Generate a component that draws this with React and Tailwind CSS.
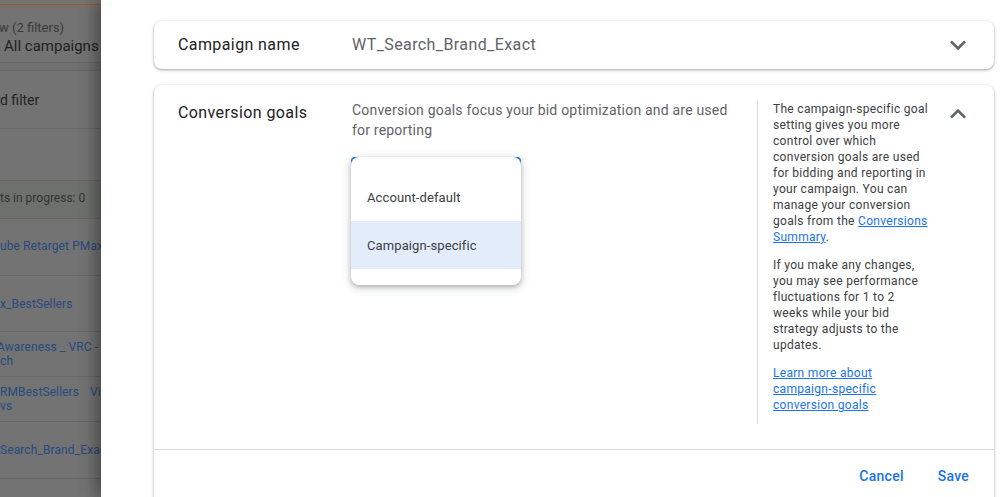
import React from 'react';

function Chevron({ up }) {
  return (
    <svg width="32" height="32" viewBox="0 0 24 24" className="shrink-0 fill-[#5f6368]">
      {up ? (
        <path d="M12 8l-6 6 1.41 1.41L12 10.83l4.59 4.58L18 14z" />
      ) : (
        <path d="M16.59 8.59L12 13.17 7.41 8.59 6 10l6 6 6-6z" />
      )}
    </svg>
  );
}

// the campaigns table behind the scrim, already dimmed
function Backdrop() {
  return (
    <div className="w-[101px] shrink-0 overflow-hidden whitespace-nowrap bg-[#737373] text-[#2a2a2a]">
      <div className="h-[4px]" />
      <div className="h-px bg-[#a6581e]" />
      <div className="h-[57px] pt-[15px]">
        <div className="-ml-[1px] text-[13px] leading-[16px] text-[#3a3a3a]">w (2 filters)</div>
        <div className="mt-[1px] pl-[4px] text-[15px] leading-[18px] text-[#222]">All campaigns</div>
      </div>
      <div className="h-[9px] border-y border-[#666] bg-[#6f6f6f]" />
      <div className="flex h-[58px] items-center border-b border-[#666] pt-px text-[14px] text-[#232323]">
        d filter
      </div>
      <div className="h-[51px]" />
      <div className="flex h-[39px] items-center border-y border-[#666] bg-[#6c716d] pb-[4px] text-[12px] text-[#333]">
        ts in progress: 0
      </div>
      <div className="text-[12px] tracking-[0.1px] text-[#284a7e]">
        <div className="flex h-[57px] items-center border-b border-[#666] pb-[3px]">ube Retarget PMax</div>
        <div className="flex h-[56px] items-center border-b border-[#666]">x_BestSellers</div>
        <div className="-ml-[3px] flex h-[45px] flex-col justify-center border-b border-[#666] leading-[14px]">
          <span>Awareness _ VRC - B</span>
          <span className="pl-[3px]">ch</span>
        </div>
        <div className="flex h-[45px] items-center border-b border-[#666] leading-[14px]">
          <div className="flex w-[90px] flex-col">
            <span>RMBestSellers</span>
            <span>vs</span>
          </div>
          <span className="self-start pt-[8px]">Vi</span>
        </div>
        <div className="flex h-[57px] items-center border-b border-[#666]">Search_Brand_Exact</div>
      </div>
    </div>
  );
}

export default function App() {
  return (
    <div className="flex h-[497px] w-[1008px] overflow-hidden font-[Roboto,sans-serif]">
      <Backdrop />
      <div className="relative z-10 flex-1 bg-white pl-[53px] pr-[14px] pt-[21px] shadow-[-6px_0_14px_rgba(0,0,0,0.35)]">
        <div className="flex h-12 items-center rounded-lg pl-6 pr-5 shadow-[0_1px_2px_rgba(60,64,67,0.3),0_1px_3px_1px_rgba(60,64,67,0.15)]">
          <div className="w-[174px] text-base tracking-[0.4px] text-[#202124]">Campaign name</div>
          <div className="flex-1 text-base tracking-[0.4px] text-[#5f6368]">WT_Search_Brand_Exact</div>
          <Chevron />
        </div>

        <div className="mt-4 rounded-t-lg shadow-[0_1px_2px_rgba(60,64,67,0.3),0_1px_3px_1px_rgba(60,64,67,0.15)]">
          <div className="flex pb-[25px] pl-6 pr-5 pt-4">
            <div className="w-[174px] text-base leading-6 tracking-[0.4px] text-[#202124]">Conversion goals</div>
            <div className="w-[405px]">
              <p className="-mt-px max-w-[385px] text-sm leading-5 tracking-[0.2px] text-[#5f6368]">
                Conversion goals focus your bid optimization and are used for reporting
              </p>
              <div className="relative -ml-px mt-[17px] h-[128px] w-[170px]">
                <div className="h-14 rounded-[4px] border-2 border-[#1a73e8]" />
                <div className="absolute inset-0 rounded-lg bg-white py-4 text-[13px] tracking-[0.1px] text-[#3c4043] shadow-[0_2px_4px_rgba(60,64,67,0.3),0_2px_8px_2px_rgba(60,64,67,0.15)]">
                  <div className="flex h-12 items-center px-4 pt-px">Account-default</div>
                  <div className="flex h-12 items-center bg-[#e3ecfb] px-4 pt-px">Campaign-specific</div>
                </div>
              </div>
            </div>
            <div className="w-[173px] border-l border-[#dadce0] pb-[11px] pl-[15px] text-xs leading-4 tracking-[0.3px] text-[#3c4043]">
              <p>
                The campaign-specific goal setting gives you more control over which conversion goals are used for
                bidding and reporting in your campaign. You can manage your conversion goals from the{' '}
                <a href="#" className="text-[#1a73e8] underline">Conversions Summary</a>.
              </p>
              <p className="mt-[12px]">
                If you make any changes, you may see performance fluctuations for 1 to 2 weeks while your bid
                strategy adjusts to the updates.
              </p>
              <p className="mt-[12px]">
                <a href="#" className="text-[#1a73e8] underline">Learn more about campaign-specific conversion goals</a>
              </p>
            </div>
            <div className="ml-auto -mt-[3px]">
              <Chevron up />
            </div>
          </div>
          <div className="flex justify-end gap-[18px] border-t border-[#dadce0] pb-6 pr-[17px] pt-2">
            <button className="h-9 px-2 text-sm font-medium tracking-[0.25px] text-[#1a73e8]">Cancel</button>
            <button className="h-9 px-2 text-sm font-medium tracking-[0.25px] text-[#1a73e8]">Save</button>
          </div>
        </div>
      </div>
    </div>
  );
}
